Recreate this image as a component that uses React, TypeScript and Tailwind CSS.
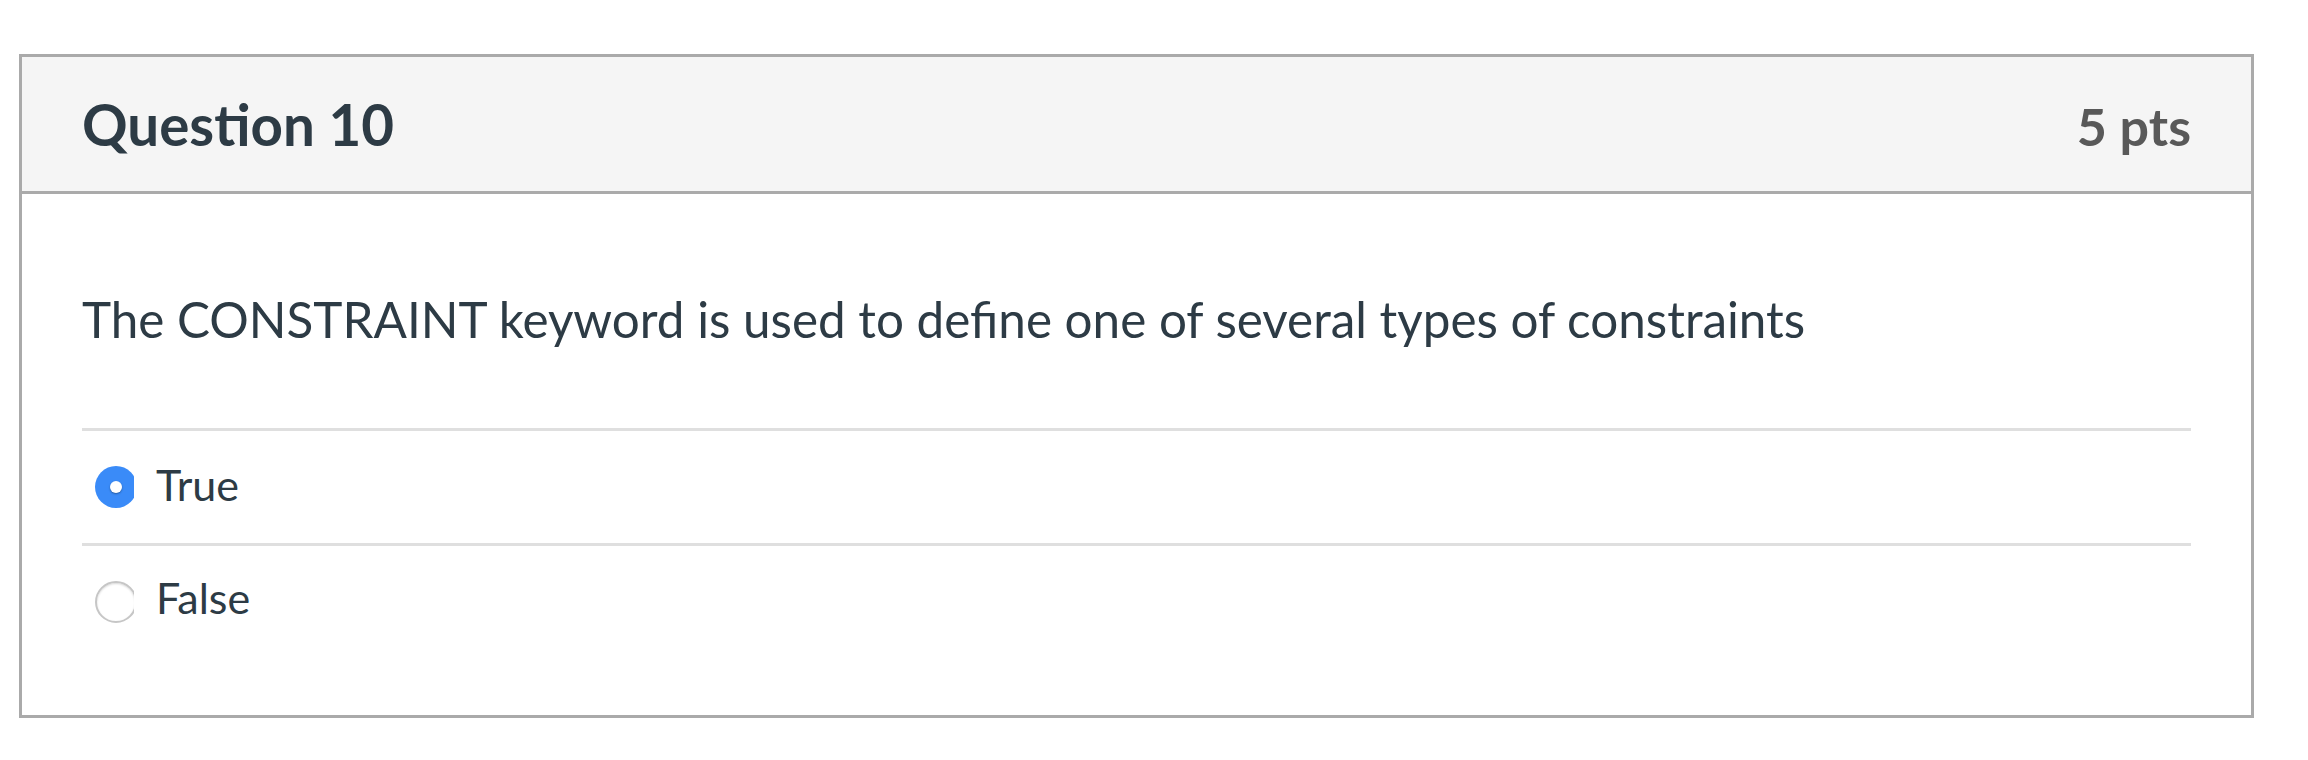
import React from "react";

function Radio({ checked }: { checked: boolean }) {
  return (
    <div className="w-[39px] h-[42px] overflow-hidden shrink-0">
      {checked ? (
        <div className="w-[42px] h-[42px] rounded-full bg-[#3a8bf8] flex items-center justify-center">
          <div className="w-[12px] h-[12px] rounded-full bg-white shadow-[0_1px_2px_rgba(0,0,0,0.35)]" />
        </div>
      ) : (
        <div className="w-[42px] h-[42px] rounded-full bg-white border-[2px] border-[#c6c6c6] shadow-[inset_0_1px_2px_rgba(0,0,0,0.15)]" />
      )}
    </div>
  );
}

export default function App() {
  const answers = [
    { label: "True", checked: true, pb: "pb-[6px]" },
    { label: "False", checked: false, pb: "pb-[10px]" },
  ];
  return (
    <div className="w-full h-[760px] bg-white pt-[54px] pl-[19px] font-['Lato',sans-serif]">
      <div className="w-[2235px] h-[664px] border-[3px] border-[#aaaaaa] flex flex-col">
        <div className="h-[137px] bg-[#f5f5f5] border-b-[3px] border-[#aaaaaa] px-[60px] flex items-center justify-between">
          <h2 className="text-[56.5px] leading-[56px] font-bold text-[#2d3b45]">Question 10</h2>
          <div className="text-[52px] leading-[52px] pt-[4px] font-bold text-[#595959]">5 pts</div>
        </div>
        <div className="px-[60px] flex flex-col">
          <p className="pt-[101px] mb-[85px] text-[49.4px] leading-[48px] text-[#2d3b45]">
            The CONSTRAINT keyword is used to define one of several types of constraints
          </p>
          {answers.map((a) => (
            <div
              key={a.label}
              className="h-[115px] border-t-[3px] border-[#dfdfdf] flex items-center pl-[13px] gap-[22px]"
            >
              <Radio checked={a.checked} />
              <span className={`text-[43px] leading-[43px] text-[#2d3b45] ${a.pb}`}>{a.label}</span>
            </div>
          ))}
        </div>
      </div>
    </div>
  );
}
